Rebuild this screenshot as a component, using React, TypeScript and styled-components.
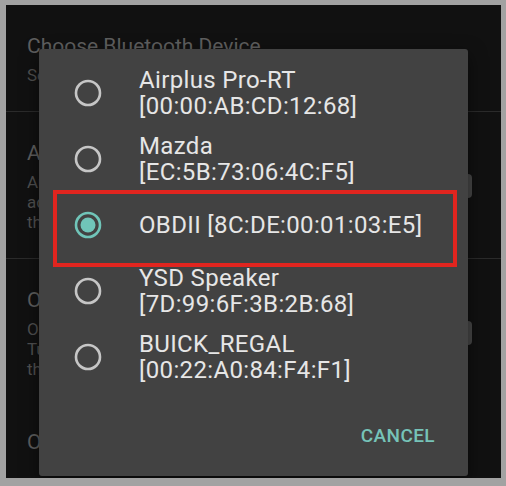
import styled, {createGlobalStyle} from 'styled-components'

interface Device {
  name: string
  address: string
  inline?: boolean
}

const devices: Device[] = [
  {name: 'Airplus Pro-RT', address: '[00:00:AB:CD:12:68]'},
  {name: 'Mazda', address: '[EC:5B:73:06:4C:F5]'},
  {name: 'OBDII', address: '[8C:DE:00:01:03:E5]', inline: true},
  {name: 'YSD Speaker', address: '[7D:99:6F:3B:2B:68]'},
  {name: 'BUICK_REGAL', address: '[00:22:A0:84:F4:F1]'},
]

const SELECTED = 2

interface Setting {
  title: string
  summary: string[]
  toggle?: boolean
  divider?: boolean
}

const settings: Setting[] = [
  {
    title: 'Choose Bluetooth Device',
    summary: ['Select the OBD adapter'],
    divider: true,
  },
  {
    title: 'Auto connect',
    summary: ['Automatically', 'adapter when', 'the device is'],
    toggle: true,
    divider: true,
  },
  {
    title: 'Only when',
    summary: ['Only connect', 'Turn on', 'the adapter'],
    toggle: true,
  },
  {title: 'OBD protocol', summary: []},
]

function Radio({checked}: {checked: boolean}) {
  return (
    <RadioIcon viewBox='0 0 28 28' $checked={checked}>
      <circle cx='14' cy='14' r='12' fill='none' strokeWidth='2.6' />
      {checked && <circle cx='14' cy='14' r='7.5' className='dot' />}
    </RadioIcon>
  )
}

function App() {
  return (
    <>
      <GlobalStyle />
      <Frame>
        <Screen>
          {settings.map(s => (
            <SettingRow key={s.title} $divider={s.divider}>
              <SettingText>
                <SettingTitle>{s.title}</SettingTitle>
                {s.summary.map(line => (
                  <SettingSummary key={line}>{line}</SettingSummary>
                ))}
              </SettingText>
              {s.toggle && <Thumb />}
            </SettingRow>
          ))}

          <Dialog role='dialog'>
            <List>
              {devices.map((d, i) => (
                <Item key={d.address}>
                  <Radio checked={i === SELECTED} />
                  <Label>
                    {d.inline ? (
                      <Line>
                        {d.name} {d.address}
                      </Line>
                    ) : (
                      <>
                        <Line>{d.name}</Line>
                        <Line>{d.address}</Line>
                      </>
                    )}
                  </Label>
                  {i === SELECTED && <Highlight />}
                </Item>
              ))}
            </List>
            <Footer>
              <TextButton>Cancel</TextButton>
            </Footer>
          </Dialog>
        </Screen>
      </Frame>
    </>
  )
}

const GlobalStyle = createGlobalStyle`
  html, body {
    margin: 0;
    padding: 0;
    background: #a2a2a2;
  }
  body {
    font-family: Roboto, 'Noto Sans', 'Liberation Sans', sans-serif;
  }
`

const Frame = styled.div`
  width: 506px;
  height: 486px;
  box-sizing: border-box;
  padding: 5px 5px 8px 6px;
  background: #a2a2a2;
`

const Screen = styled.div`
  position: relative;
  height: 100%;
  overflow: hidden;
  background: #111111;
`

const SettingRow = styled.div<{$divider?: boolean}>`
  display: flex;
  align-items: center;
  padding: 28px 29px ${p => (p.$divider ? '26px' : '21px')} 21px;
  border-bottom: 1px solid ${p => (p.$divider ? '#2b2b2b' : 'transparent')};
`

const SettingText = styled.div`
  flex: 1;
  min-width: 0;
`

const SettingTitle = styled.div`
  font-size: 21px;
  line-height: 26px;
  color: #5f5f5f;
  margin-bottom: 6px;
  white-space: nowrap;
`

const SettingSummary = styled.div`
  font-size: 17px;
  line-height: 20px;
  color: #505050;
  white-space: nowrap;
`

const Thumb = styled.div`
  width: 30px;
  height: 24px;
  border-radius: 4px;
  background: #474747;
`

const Dialog = styled.div`
  position: absolute;
  left: 33px;
  top: 44px;
  width: 429px;
  height: 427px;
  border-radius: 3px;
  background: #424242;
  box-shadow: 0 6px 18px rgba(0, 0, 0, 0.5);
  display: flex;
  flex-direction: column;
`

const List = styled.div`
  padding-top: 11px;
`

const Item = styled.div`
  position: relative;
  display: flex;
  align-items: center;
  gap: 37px;
  height: 66px;
  padding-left: 35px;
`

const RadioIcon = styled.svg<{$checked: boolean}>`
  width: 28px;
  height: 28px;
  flex: none;

  circle {
    stroke: ${p => (p.$checked ? '#70c5b9' : '#c6c6c6')};
  }
  .dot {
    stroke: none;
    fill: #70c5b9;
  }
`

const Label = styled.div`
  display: flex;
  flex-direction: column;
`

const Line = styled.span`
  font-size: 24px;
  line-height: 26px;
  letter-spacing: 0.35px;
  color: #e6e6e6;
  white-space: nowrap;
`

const Highlight = styled.div`
  position: absolute;
  left: 14px;
  right: 11px;
  top: -2px;
  bottom: -9px;
  border: 4px solid #e1251f;
  pointer-events: none;
`

const Footer = styled.div`
  display: flex;
  justify-content: flex-end;
  padding: 35px 33px 0;
`

const TextButton = styled.button`
  border: none;
  background: none;
  padding: 0;
  font-family: Roboto, 'Liberation Sans', sans-serif;
  font-size: 19px;
  line-height: 22px;
  font-weight: 500;
  letter-spacing: 0.4px;
  text-transform: uppercase;
  color: #76c3b8;
  cursor: pointer;
`

export default App
